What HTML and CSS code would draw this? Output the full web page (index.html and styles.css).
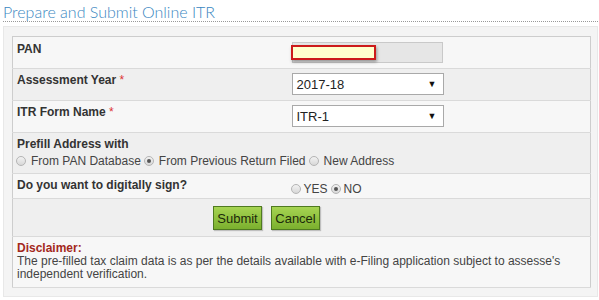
FILE: index.html
```html
<!DOCTYPE html>
<html lang="en">
<head>
  <meta charset="UTF-8">
  <title>Prepare and Submit Online ITR</title>
  <link rel="stylesheet" href="styles.css">
</head>
<body>
  <h2 class="page-title">Prepare and Submit Online ITR</h2>

  <div class="panel">
    <table class="itr-table">
      <tr class="row-light">
        <td class="label-cell">PAN</td>
        <td class="field-cell">
          <div class="pan-field"><span class="pan-mark"></span></div>
        </td>
      </tr>
      <tr class="row-dark">
        <td class="label-cell">Assessment Year <span class="req">*</span></td>
        <td class="field-cell">
          <div class="select-box"><span>2017-18</span><span class="arrow">&#9660;</span></div>
        </td>
      </tr>
      <tr class="row-light">
        <td class="label-cell">ITR Form Name <span class="req">*</span></td>
        <td class="field-cell">
          <div class="select-box"><span>ITR-1</span><span class="arrow">&#9660;</span></div>
        </td>
      </tr>
      <tr class="row-dark row-prefill">
        <td colspan="2" class="label-cell">
          <div class="prefill-title">Prefill Address with</div>
          <div class="radio-line">
            <label class="opt"><span class="radio"></span>From PAN Database</label>
            <label class="opt"><span class="radio checked"></span>From Previous Return Filed</label>
            <label class="opt"><span class="radio"></span>New Address</label>
          </div>
        </td>
      </tr>
      <tr class="row-light row-sign">
        <td class="label-cell">Do you want to digitally sign?</td>
        <td class="field-cell sign-cell">
          <div class="radio-line">
            <label class="opt"><span class="radio"></span>YES</label>
            <label class="opt"><span class="radio checked"></span>NO</label>
          </div>
        </td>
      </tr>
      <tr class="row-dark row-buttons">
        <td colspan="2">
          <div class="buttons">
            <button class="btn">Submit</button>
            <button class="btn">Cancel</button>
          </div>
        </td>
      </tr>
      <tr class="row-light row-disclaimer">
        <td colspan="2" class="disclaimer">
          <div class="disclaimer-title">Disclaimer:</div>
          <p>The pre-filled tax claim data is as per the details available with e-Filing application subject to assesse's independent verification.</p>
        </td>
      </tr>
    </table>
  </div>
</body>
</html>
```

FILE: styles.css
```css
* {
  box-sizing: border-box;
}

body {
  margin: 0;
  padding: 3px 1px 0 3px;
  background: #fff;
  font-family: 'Liberation Sans', Arial, sans-serif;
  color: #333;
}

.page-title {
  margin: 0;
  font-family: 'Lato', 'DejaVu Sans', sans-serif;
  font-weight: 300;
  font-size: 16px;
  line-height: 17px;
  color: #3a87c1;
  padding-bottom: 1px;
  border-bottom: 1px dotted #999;
}

.panel {
  margin-top: 4px;
  background: #f4f4f4;
  border: 1px solid #e8e8e8;
  padding: 9px 6px 8px 8px;
}

.itr-table {
  width: 100%;
  border-collapse: collapse;
  border: 1px solid #cdcdcd;
  font-size: 12px;
}

.itr-table td {
  padding: 5px 4px;
  vertical-align: top;
  border-bottom: 1px solid #dadada;
}

.row-light {
  background: #f7f7f7;
}

.row-dark {
  background: #efefef;
}

.label-cell {
  font-weight: bold;
  line-height: 14px;
  color: #333;
  width: 275px;
}

.req {
  color: #d33;
  font-weight: normal;
}

.itr-table tr:nth-child(1) td {
  height: 32px;
}

.itr-table tr:nth-child(2) td,
.itr-table tr:nth-child(3) td {
  height: 32px;
  padding-top: 4px;
}

.field-cell {
  padding-left: 5px;
}

.pan-field {
  width: 151px;
  height: 21px;
  background: #e6e6e6;
  border: 1px solid #c9c9c9;
  display: flex;
  align-items: center;
}

.pan-mark {
  width: 85px;
  height: 15px;
  margin-left: -2px;
  background: #ffffcc;
  border: 2px solid #cc1a1a;
  box-shadow: 1px 2px 3px rgba(0, 0, 0, 0.35);
}

.select-box {
  width: 152px;
  height: 22px;
  background: #fff;
  border: 1px solid #a9a9a9;
  display: flex;
  align-items: center;
  justify-content: space-between;
  padding: 0 6px 0 4px;
  font-size: 13px;
  color: #222;
}

.arrow {
  font-size: 9px;
  color: #111;
}

.row-prefill td {
  height: 41px;
  padding-top: 4px;
}

.prefill-title {
  margin-bottom: 3px;
}

.radio-line {
  display: flex;
  gap: 4px;
  font-weight: normal;
  color: #444;
  line-height: 14px;
}

.opt {
  display: inline-flex;
  align-items: center;
  gap: 5px;
}

.radio {
  width: 10px;
  height: 10px;
  border-radius: 50%;
  border: 1px solid #b5b5b5;
  background: linear-gradient(#f2f2f2, #d8d8d8);
  margin-left: -1px;
  position: relative;
}

.radio.checked::after {
  content: "";
  position: absolute;
  left: 2px;
  top: 2px;
  width: 4px;
  height: 4px;
  border-radius: 50%;
  background: #555;
}

.itr-table .row-sign td {
  height: 25px;
  padding-top: 4px;
  padding-bottom: 0;
}

.itr-table .row-sign .sign-cell {
  padding-top: 8px;
}

.sign-cell .opt {
  gap: 3px;
}

.row-buttons td {
  height: 38px;
  padding: 7px 0 5px 0;
}

.buttons {
  display: flex;
  gap: 9px;
  padding-left: 200px;
}

.btn {
  width: 49px;
  height: 24px;
  padding: 0;
  font-family: 'Liberation Sans', Arial, sans-serif;
  font-size: 13px;
  color: #1c2a0a;
  background: linear-gradient(#a6d452, #7bb02e);
  border: 1px solid #4f7a20;
  box-shadow: 1px 1px 1px rgba(0, 0, 0, 0.2);
}

.itr-table .disclaimer {
  padding: 5px 4px 6px;
  line-height: 13px;
}

.disclaimer-title {
  color: #a3281c;
  font-weight: bold;
}

.disclaimer p {
  margin: 0;
  max-width: 560px;
  color: #444;
}
```
